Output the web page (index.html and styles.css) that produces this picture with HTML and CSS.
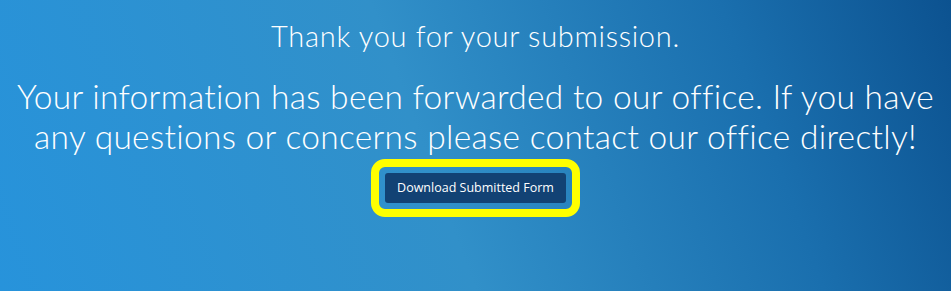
FILE: index.html
```html
<!DOCTYPE html>
<html lang="en">
<head>
<meta charset="utf-8">
<title>Thank you</title>
<link rel="stylesheet" href="styles.css">
</head>
<body>
<main class="page">
  <h1 class="title">Thank you for your submission.</h1>
  <p class="message">Your information has been forwarded to our office. If you have any questions or concerns please contact our office directly!</p>
  <div class="highlight">
    <a class="download-btn" href="#">Download Submitted Form</a>
  </div>
</main>
</body>
</html>
```

FILE: styles.css
```css
html, body {
  margin: 0;
  padding: 0;
  height: 100%;
}

body {
  background: linear-gradient(70deg, #2793db 0%, #3190c9 45%, #1a6fae 78%, #0c5290 100%);
  color: #ffffff;
  font-family: "Lato", "Open Sans", sans-serif;
  overflow: hidden;
}

.page {
  display: flex;
  flex-direction: column;
  align-items: center;
  padding: 18px 15px 0;
  text-align: center;
}

.title {
  margin: 0;
  font-size: 29px;
  font-weight: 300;
  line-height: 35px;
  letter-spacing: 0.7px;
}

.message {
  margin: 23px 0 0;
  font-size: 33.5px;
  font-weight: 300;
  line-height: 40px;
  letter-spacing: 0.3px;
}

.highlight {
  margin-top: 3px;
  border: 8px solid #ffff00;
  border-radius: 14px;
  padding: 6px;
}

.download-btn {
  display: block;
  background: #124274;
  color: #ffffff;
  text-decoration: none;
  font-family: "Open Sans", "Noto Sans", sans-serif;
  font-size: 12.5px;
  line-height: 30px;
  padding: 0 12px;
  border-radius: 3px;
}
```
